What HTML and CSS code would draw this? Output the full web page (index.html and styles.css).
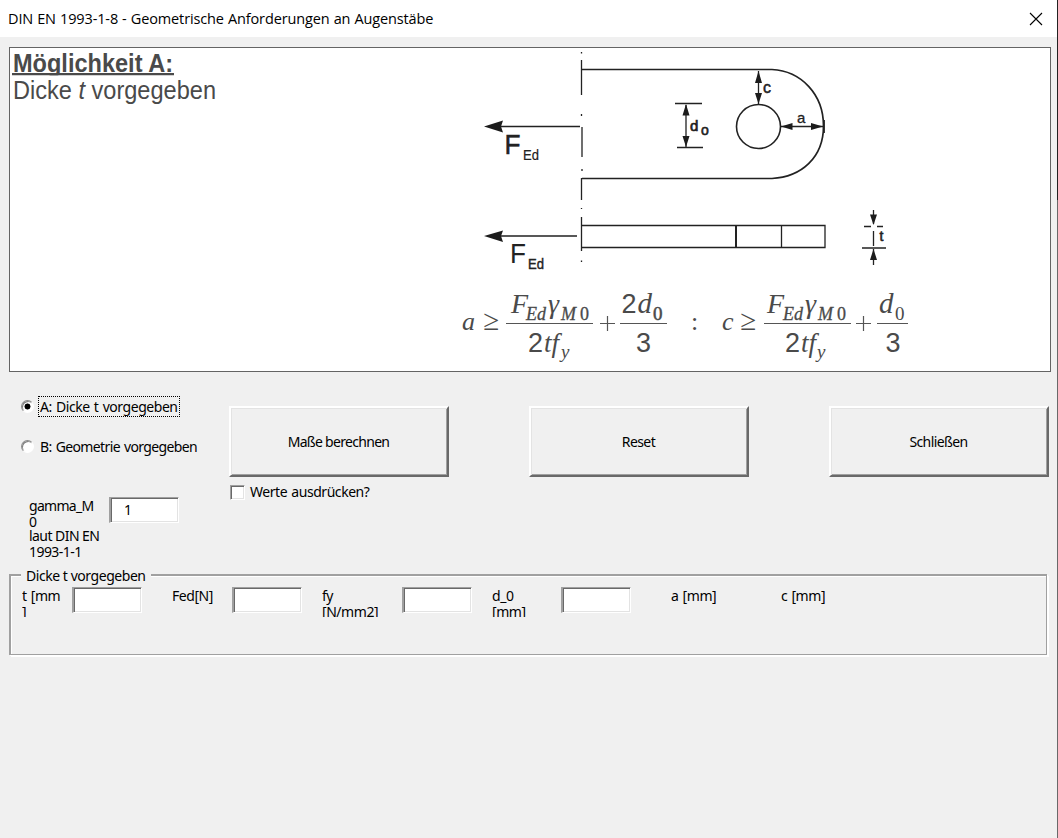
FILE: index.html
```html
<!DOCTYPE html>
<html lang="de">
<head>
<meta charset="utf-8">
<title>DIN EN 1993-1-8 - Geometrische Anforderungen an Augenstäbe</title>
<link rel="stylesheet" href="styles.css">
</head>
<body>
<div class="window">
  <header class="titlebar">
    <span class="title">DIN EN 1993-1-8 - Geometrische Anforderungen an Augenstäbe</span>
    <svg class="close" width="14" height="14" viewBox="0 0 14 14"><path d="M1 1L13 13M13 1L1 13" fill="none" stroke="#000" stroke-width="1.1"/></svg>
  </header>
  <main class="content">
    <svg class="figure" width="1040" height="323" viewBox="10 48 1040 323">
      <g class="heading">
        <text x="13" y="71.500" font-weight="bold" textLength="160" lengthAdjust="spacingAndGlyphs">Möglichkeit A:</text>
        <rect x="12" y="73" width="162" height="2.500"/>
        <rect x="12" y="75.500" width="162" height="4" fill="#fff"/>
        <text x="13" y="99" textLength="203" lengthAdjust="spacingAndGlyphs">Dicke <tspan font-style="italic">t</tspan> vorgegeben</text>
      </g>
      <g class="lines">
        <path d="M581.500 52v1.500M581.500 60v35M581.500 114v2M582 127v30M582 169v2M581.500 178v22M581.500 208v1M581.500 217v34M581.500 260.500v1.500"/>
        <path d="M582 69.500H772C801 71 823.500 94 823.500 126S801 177 772 178.500H582" stroke-width="1.700"/>
        <circle cx="758.500" cy="126.500" r="22" stroke-width="1.600"/>
        <path d="M500 126.500H580M500 236H577"/>
        <path d="M582 225.500H825V247.500H582M781.500 226v21"/>
        <path d="M736 226v22" stroke-width="2"/>
        <path d="M675 103.500H702M677 147.500H703M686 105v42M758.500 71v33M781 126.500h42"/>
        <path d="M824 120v13" stroke-width="1.800"/>
        <path d="M873.500 210v14M864 226.500h7M877 226.500h6M873.500 231v15M862 248h24M873.500 249v16"/>
      </g>
      <g class="arrows">
        <path d="M484 126.500L503 120.500L501 126.500L503 132.500ZM484 236L503 230.500L501 236L503 242Z"/>
        <path d="M686 104l-3.500 11.500h7zM686 147l-3.500-11h7zM758.500 71l-3.500 12h7zM758.500 104l-3.500-11h7zM781 126.500l11.500-3.500v7zM823 126.500l-12-3.500v7zM873.500 225l-3.500-10.500h7zM873.500 249l-3.500 11h7z"/>
      </g>
      <g class="marks">
        <text x="504.500" y="154" font-size="27" stroke-width=".5" textLength="16" lengthAdjust="spacingAndGlyphs">F</text>
        <text x="523" y="160" font-size="15" stroke-width=".2" textLength="16" lengthAdjust="spacingAndGlyphs">Ed</text>
        <text x="510" y="263" font-size="27" textLength="16" lengthAdjust="spacingAndGlyphs">F</text>
        <text x="528" y="268.500" font-size="14.500" stroke-width=".4" textLength="16" lengthAdjust="spacingAndGlyphs">Ed</text>
        <text x="690" y="131" font-size="15" stroke-width=".7">d</text>
        <text x="701" y="135" font-size="14" stroke-width=".6">o</text>
        <text x="763" y="93" font-size="16" stroke-width=".5">c</text>
        <text x="797" y="122.500" font-size="15" stroke-width=".3">a</text>
        <text x="879.500" y="241" font-size="14" stroke-width=".6">t</text>
      </g>
      <g class="formula">
        <text x="462" y="330" font-size="26">a</text>
        <text x="483" y="330" font-size="29">≥</text>
        <text x="511" y="313" font-size="28">F</text>
        <text x="526" y="320" font-size="18" stroke-width=".3" textLength="20">Ed</text>
        <text x="548" y="313" font-size="28">γ</text>
        <text x="561" y="320" font-size="18" stroke-width=".3" textLength="28">M<tspan font-style="normal">0</tspan></text>
        <path d="M506 323.500H593M620 323.500H667M600 323.500h15M607.500 316v15"/>
        <text x="528" y="352" font-size="27"><tspan class="sans">2</tspan><tspan x="544">tf</tspan></text>
        <text x="561" y="358" font-size="19">y</text>
        <text x="621.500" y="313" font-size="27"><tspan class="sans">2</tspan><tspan x="637.500" font-size="29">d</tspan></text>
        <text x="653" y="320" font-size="19" stroke-width=".5" class="upright">0</text>
        <text x="636" y="352" font-size="27" class="sans">3</text>
        <text x="691" y="330" font-size="26" class="upright">:</text>
        <text x="722" y="330" font-size="26">c</text>
        <text x="740" y="330" font-size="29">≥</text>
        <text x="767" y="313" font-size="28">F</text>
        <text x="783" y="320" font-size="18" stroke-width=".3" textLength="20">Ed</text>
        <text x="805" y="313" font-size="28">γ</text>
        <text x="818" y="320" font-size="18" stroke-width=".3" textLength="28">M<tspan font-style="normal">0</tspan></text>
        <path d="M764 323.500H851M877 323.500H908M856 323.500h15M863.500 316v15"/>
        <text x="785" y="352" font-size="27"><tspan class="sans">2</tspan><tspan x="801">tf</tspan></text>
        <text x="817" y="358" font-size="19">y</text>
        <text x="879" y="313" font-size="29">d</text>
        <text x="895" y="320" font-size="19" class="upright">0</text>
        <text x="885.500" y="352" font-size="27" class="sans">3</text>
      </g>
    </svg>
    <section class="controls">
      <div class="options">
        <label class="option"><span class="radio checked"></span><span class="caption focused">A: Dicke t vorgegeben</span></label>
        <label class="option"><span class="radio"></span><span class="caption geometry">B: Geometrie vorgegeben</span></label>
        <div class="gamma">
          <div><div class="label gamma-label">gamma_M<br>0</div><div class="label norm-label">laut DIN EN<br>1993-1-1</div></div>
          <div class="field gamma-field">1</div>
        </div>
      </div>
      <div class="actions">
        <div class="buttons">
          <button class="button">Maße berechnen</button>
          <button class="button">Reset</button>
          <button class="button">Schließen</button>
        </div>
        <label class="print"><span class="checkbox"></span><span class="print-text">Werte ausdrücken?</span></label>
      </div>
    </section>
    <section class="group">
      <span class="legend">Dicke t vorgegeben</span>
      <div class="inputs">
        <div class="label">t [mm<br>]</div><div class="field"></div>
        <div class="label">Fed[N]</div><div class="field"></div>
        <div class="label">fy<br>[N/mm2]</div><div class="field"></div>
        <div class="label">d_0<br>[mm]</div><div class="field"></div>
        <div class="label">a [mm]</div>
        <div class="label">c [mm]</div>
      </div>
    </section>
  </main>
</div>
</body>
</html>
```
FILE: styles.css
```css
* { box-sizing: border-box; }
body {
  margin: 0;
  font: 14px/16px "Noto Sans", sans-serif;
  letter-spacing: -0.45px;
  color: #000;
}
.window {
  width: 1058px;
  height: 838px;
  overflow: hidden;
  background: linear-gradient(#222 0 200px, #696969 200px) right / 1px 100% no-repeat #f0f0f0;
}
.titlebar {
  display: flex;
  justify-content: space-between;
  align-items: center;
  width: 1057px;
  height: 37px;
  padding: 0 14px 0 8px;
  background: #fff;
}
.title { font: 14.5px "Open Sans", sans-serif; letter-spacing: -0.12px; word-spacing: 0.4px; }
.content { padding: 10px 7px 0 9px; }
.figure {
  display: block;
  box-sizing: content-box;
  border: 1px solid #646464;
  background: #fff;
  letter-spacing: 0;
}
.heading { font: 25px "Liberation Sans", sans-serif; fill: #4a4a4a; }
.lines { fill: none; stroke: #222; stroke-width: 1.3; }
.arrows { fill: #1c1c1c; }
.marks { font-family: "Liberation Sans", sans-serif; fill: #222; stroke: #222; stroke-width: 0; }
.formula { font-family: "Liberation Serif", serif; font-style: italic; fill: #4a4a4a; stroke: #4a4a4a; stroke-width: 0; }
.formula path { stroke: #555; stroke-width: 1.2; }
.sans { font-family: "Liberation Sans", sans-serif; font-style: normal; }
.upright { font-style: normal; }

.controls { display: flex; height: 202px; padding-top: 24px; }
.options { width: 220px; padding-left: 12px; }
.option { display: flex; align-items: center; height: 21px; margin-bottom: 19px; gap: 4px; }
.radio {
  width: 13px;
  height: 13px;
  border: 1px solid;
  border-color: #8c8c8c #fff #fff #8c8c8c;
  border-radius: 50%;
  background: #fff;
  box-shadow: inset 1px 1px #808080;
}
.checked { background: radial-gradient(circle at 5.5px 5.5px, #000 2.7px, #fff 3.3px); }
.caption { height: 21px; padding: 2px 1px; border: 1px solid transparent; white-space: nowrap; word-spacing: 1px; }
.focused { width: 142px; border: 1px dotted #000; }
.geometry { letter-spacing: -0.62px; }
.gamma { display: flex; width: 160px; margin-top: 40px; padding-left: 8px; }
.label { overflow: hidden; white-space: nowrap; }
.gamma-label { width: 80px; height: 29px; margin-top: 1px; letter-spacing: -0.7px; }
.norm-label { height: 29px; margin-top: 1px; letter-spacing: -0.55px; }
.actions { padding-top: 10px; }
.buttons { display: flex; gap: 80px; }
.button {
  width: 220px;
  height: 71px;
  padding: 0 1px 0 0;
  border: 2px solid;
  border-color: #fff #696969 #696969 #fff;
  background: #f0f0f0;
  box-shadow: inset 1px 1px #e3e3e3, inset -1px -1px #a0a0a0;
  font: inherit;
  letter-spacing: -0.7px;
  color: inherit;
}
.button + .button { letter-spacing: -0.6px; }
.print { display: flex; align-items: center; gap: 5px; margin: 7px 0 0 1px; }
.print-text { word-spacing: 1px; }
.checkbox {
  width: 15px;
  height: 15px;
  border: 1px solid;
  border-color: #a0a0a0 #fff #fff #a0a0a0;
  background: #fff;
  box-shadow: inset 1px 1px #696969, inset -1px -1px #e3e3e3;
}
.field {
  width: 70px;
  height: 26px;
  padding: 4px 0 0 13px;
  border: solid;
  border-width: 1px 1px 1px 2px;
  border-color: #a0a0a0 #fff #fff #a0a0a0;
  background: #fff;
  box-shadow: inset 1px 1px #696969, inset -1px -1px #e3e3e3;
}
.group {
  width: 1038px;
  height: 81px;
  border: solid #a0a0a0;
  border-width: 2px 1px 1px 2px;
  box-shadow: 1px 1px #fff, 2px 2px #fff, inset 1px 1px #fff;
}
.legend {
  display: block;
  width: 130px;
  height: 16px;
  margin: -8px 0 0 10px;
  padding-left: 5px;
  background: #f0f0f0;
}
.inputs {
  display: grid;
  grid-template-columns: 50px 100px 60px 90px 80px 90px 69px 110px 110px 100px;
  padding: 3px 0 0 11px;
}
.inputs .label { height: 29px; margin-top: 1px; word-spacing: 1px; }
```
